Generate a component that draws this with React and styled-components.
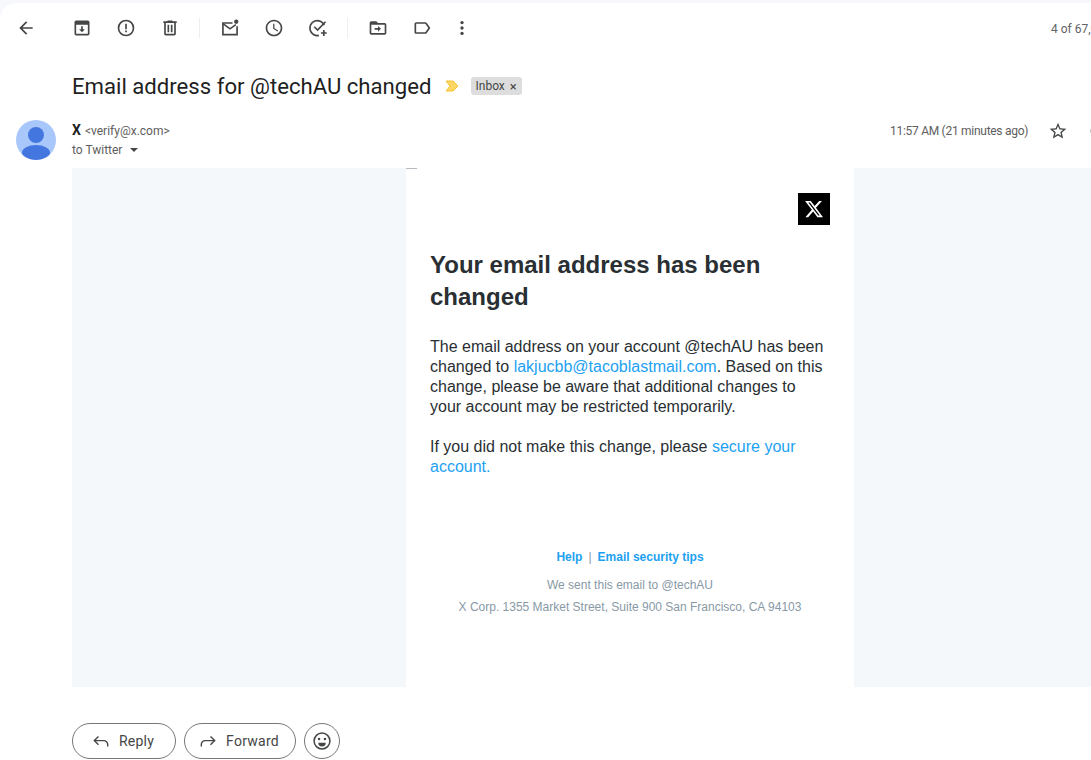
import React from "react";
import styled, { createGlobalStyle } from "styled-components";

const GlobalStyle = createGlobalStyle`
  html, body {
    margin: 0;
    padding: 0;
    height: 100%;
    overflow: hidden;
    background: #fff;
    font-family: Roboto, "Liberation Sans", Arial, sans-serif;
  }
`;

const iconPaths = {
  back: "M20 11H7.83l5.59-5.59L12 4l-8 8 8 8 1.41-1.41L7.83 13H20v-2z",
  trash:
    "M15 4V3H9v1H4v2h1v13c0 1.1.9 2 2 2h10c1.1 0 2-.9 2-2V6h1V4h-5zm2 15H7V6h10v13zM9 8h2v9H9zm4 0h2v9h-2z",
  clock:
    "M11.99 2C6.47 2 2 6.48 2 12s4.47 10 9.99 10C17.52 22 22 17.52 22 12S17.52 2 11.99 2zM12 20c-4.42 0-8-3.58-8-8s3.58-8 8-8 8 3.58 8 8-3.58 8-8 8zm.5-13H11v6l5.25 3.15.75-1.23-4.5-2.67z",
  label:
    "M17.63 5.84C17.27 5.33 16.67 5 16 5L5 5.01C3.9 5.01 3 5.9 3 7v10c0 1.1.9 1.99 2 1.99L16 19c.67 0 1.27-.33 1.63-.84L22 12l-4.37-6.16zM16 17H5V7h11l3.55 5L16 17z",
  star:
    "M22 9.24l-7.19-.62L12 2 9.19 8.63 2 9.24l5.46 4.73L5.82 21 12 17.27 18.18 21l-1.63-7.03L22 9.24zM12 15.4l-3.76 2.27 1-4.28-3.32-2.88 4.38-.38L12 6.1l1.71 4.04 4.38.38-3.32 2.88 1 4.28L12 15.4z",
};

function Icon({ name, size = 20, color = "#444746" }) {
  return (
    <svg width={size} height={size} viewBox="0 0 24 24" fill={color}>
      {name === "archive" && (
        <>
          <path d="M5 3h14a2 2 0 0 1 2 2v14a2 2 0 0 1-2 2H5a2 2 0 0 1-2-2V5a2 2 0 0 1 2-2zm0 5v11h14V8H5z" />
          <path d="M11 10h2v3.5h2.5L12 17l-3.5-3.5H11z" />
        </>
      )}
      {name === "report" && (
        <>
          <path d="M12 2a10 10 0 1 0 0 20 10 10 0 0 0 0-20zm0 18a8 8 0 1 1 0-16 8 8 0 0 1 0 16z" />
          <path d="M11 7h2v6.5h-2zM11 15h2v2h-2z" />
        </>
      )}
      {name === "unread" && (
        <>
          <g fill="none" stroke={color} strokeWidth="2">
            <path d="M15 6H3.5v14h17V10" />
            <path d="M4 7l8 6 7-5" />
          </g>
          <circle cx="19.5" cy="4.5" r="2.6" />
        </>
      )}
      {name === "addTask" && (
        <g fill="none" stroke={color} strokeWidth="2">
          <path d="M19.5 8.5A9 9 0 1 0 13 20.9" />
          <path d="M7.5 10.5l4 4L21 4.5" />
          <path d="M19 14.5v7M15.5 18h7" />
        </g>
      )}
      {name === "move" && (
        <>
          <path d="M20 6h-8l-2-2H4c-1.1 0-2 .9-2 2v12c0 1.1.9 2 2 2h16c1.1 0 2-.9 2-2V8c0-1.1-.9-2-2-2zm0 12H4V8h16v10z" />
          <path d="M12 9.5l3.5 3.5-3.5 3.5V14H8v-2h4z" />
        </>
      )}
      {name === "more" && (
        <>
          <circle cx="12" cy="5.5" r="2" />
          <circle cx="12" cy="12" r="2" />
          <circle cx="12" cy="18.5" r="2" />
        </>
      )}
      {iconPaths[name] && <path d={iconPaths[name]} />}
    </svg>
  );
}

function ReplyIcon({ flip }) {
  return (
    <svg
      width="20"
      height="20"
      viewBox="0 0 24 24"
      fill="none"
      stroke="#444746"
      strokeWidth="1.7"
      style={flip ? { transform: "scaleX(-1)" } : undefined}
    >
      <path d="M9 6.5L4 11.5l5 5" />
      <path d="M4 11.5h11.5a4.5 4.5 0 0 1 4.5 4.5v2.5" />
    </svg>
  );
}

export default function App() {
  return (
    <Page>
      <GlobalStyle />
      <Sheet>
        <Toolbar>
          <BackButton>
            <Icon name="back" />
          </BackButton>
          <ToolGroup>
            <ToolButton><Icon name="archive" /></ToolButton>
            <ToolButton><Icon name="report" /></ToolButton>
            <ToolButton><Icon name="trash" /></ToolButton>
          </ToolGroup>
          <ToolDivider />
          <ToolGroup>
            <ToolButton><Icon name="unread" /></ToolButton>
            <ToolButton><Icon name="clock" /></ToolButton>
            <ToolButton><Icon name="addTask" /></ToolButton>
          </ToolGroup>
          <ToolDivider />
          <ToolGroup>
            <ToolButton><Icon name="move" /></ToolButton>
            <ToolButton><Icon name="label" /></ToolButton>
            <ToolButton $narrow><Icon name="more" /></ToolButton>
          </ToolGroup>
          <Pager>4 of 67,000</Pager>
        </Toolbar>

        <SubjectRow>
          <Subject>Email address for @techAU changed</Subject>
          <svg width="14" height="12" viewBox="0 0 14 12">
            <path d="M1 1h7l5 5-5 5H1l4-5z" fill="#fdd663" stroke="#f4c430" strokeWidth="1" />
          </svg>
          <Chip>
            Inbox <ChipClose>×</ChipClose>
          </Chip>
        </SubjectRow>

        <SenderRow>
          <Avatar viewBox="0 0 40 40">
            <clipPath id="avatar-clip">
              <circle cx="20" cy="20" r="20" />
            </clipPath>
            <g clipPath="url(#avatar-clip)">
              <rect width="40" height="40" fill="#a8c7fa" />
              <circle cx="20" cy="15" r="8" fill="#4476e0" />
              <ellipse cx="20" cy="32.5" rx="14" ry="7.5" fill="#4476e0" />
            </g>
          </Avatar>
          <SenderInfo>
            <SenderLine>
              <SenderName>X</SenderName>
              <SenderMail>&lt;verify@x.com&gt;</SenderMail>
            </SenderLine>
            <ToLine>
              to Twitter
              <Caret />
            </ToLine>
          </SenderInfo>
          <Meta>
            <Time>11:57 AM (21 minutes ago)</Time>
            <Icon name="star" size={20} />
            <MetaExtra>
              <Icon name="report" size={20} />
            </MetaExtra>
          </Meta>
        </SenderRow>

        <MailBody>
          <Gutter />
          <Card>
            <LogoRow>
              <Logo>
                <svg width="20" height="20" viewBox="0 0 24 24" fill="#fff">
                  <path d="M18.24 2.25h3.31l-7.23 8.26 8.5 11.24h-6.66l-5.21-6.82-5.97 6.82H1.68l7.73-8.84L1.25 2.25h6.83l4.71 6.23zm-1.16 17.52h1.83L7.08 4.13H5.12z" />
                </svg>
              </Logo>
            </LogoRow>
            <Heading>Your email address has been changed</Heading>
            <Paragraph>
              The email address on your account @techAU has been changed to{" "}
              <BlueLink>lakjucbb@tacoblastmail.com</BlueLink>. Based on this change,
              please be aware that additional changes to your account may be
              restricted temporarily.
            </Paragraph>
            <Paragraph>
              If you did not make this change, please{" "}
              <BlueLink>secure your account.</BlueLink>
            </Paragraph>
            <Footer>
              <FooterLinks>
                <FooterLink>Help</FooterLink>
                <FooterSep>|</FooterSep>
                <FooterLink>Email security tips</FooterLink>
              </FooterLinks>
              <FooterText>We sent this email to @techAU</FooterText>
              <FooterText>X Corp. 1355 Market Street, Suite 900 San Francisco, CA 94103</FooterText>
            </Footer>
          </Card>
          <Gutter />
        </MailBody>

        <Actions>
          <PillButton $width={104}>
            <ReplyIcon />
            Reply
          </PillButton>
          <PillButton $width={112}>
            <ReplyIcon flip />
            Forward
          </PillButton>
          <EmojiButton>
            <svg width="20" height="20" viewBox="0 0 24 24" fill="none">
              <circle cx="12" cy="12" r="9.5" stroke="#444746" strokeWidth="1.8" />
              <circle cx="8.5" cy="9.5" r="1.5" fill="#444746" />
              <circle cx="15.5" cy="9.5" r="1.5" fill="#444746" />
              <path d="M7.5 14h9a4.5 4.5 0 0 1-9 0z" fill="#444746" />
            </svg>
          </EmojiButton>
        </Actions>
      </Sheet>
    </Page>
  );
}

const Page = styled.div`
  width: 1160px;
  height: 760px;
  overflow: hidden;
  background: #f6f8fc;
  color: #1f1f1f;
`;

const Sheet = styled.div`
  height: 757px;
  margin-top: 3px;
  padding-top: 0.02px;
  border-top-left-radius: 16px;
  background: #fff;
`;

const Toolbar = styled.div`
  display: flex;
  align-items: center;
  height: 50px;
  padding-left: 6px;
`;

const BackButton = styled.div`
  display: flex;
  align-items: center;
  justify-content: center;
  width: 40px;
  margin-right: 14px;
`;

const ToolGroup = styled.div`
  display: flex;
`;

const ToolButton = styled.div`
  display: flex;
  align-items: center;
  justify-content: center;
  width: ${(p) => (p.$narrow ? 36 : 44)}px;
`;

const ToolDivider = styled.div`
  width: 1px;
  height: 20px;
  margin: 0 8px 0 7px;
  background: #eceef1;
`;

const Pager = styled.div`
  margin-left: 571px;
  padding-top: 2px;
  font-size: 12px;
  color: #5f6368;
  white-space: nowrap;
`;

const SubjectRow = styled.div`
  display: flex;
  align-items: center;
  height: 32px;
  margin-top: 17px;
  padding-left: 72px;
`;

const Subject = styled.h1`
  margin: 0 13px 0 0;
  font-size: 22.15px;
  font-weight: 400;
  color: #1f1f1f;
  white-space: nowrap;
`;

const Chip = styled.span`
  display: flex;
  align-items: center;
  gap: 5px;
  height: 18px;
  margin-left: 12px;
  padding: 0 5px;
  border-radius: 3px;
  background: #dddddd;
  font-size: 12px;
  color: #444746;
`;

const ChipClose = styled.span`
  font-size: 13px;
`;

const SenderRow = styled.div`
  display: flex;
  align-items: flex-start;
  height: 51px;
  margin-top: 15px;
  padding-left: 16px;
`;

const Avatar = styled.svg`
  width: 40px;
  height: 40px;
  flex-shrink: 0;
  margin-top: 3px;
`;

const SenderInfo = styled.div`
  display: flex;
  flex-direction: column;
  width: 100px;
  margin-left: 16px;
  padding-top: 5px;
`;

const SenderLine = styled.div`
  display: flex;
  align-items: baseline;
  gap: 4px;
  height: 18px;
  white-space: nowrap;
`;

const SenderName = styled.span`
  font-size: 14px;
  font-weight: 700;
  color: #1f1f1f;
`;

const SenderMail = styled.span`
  font-size: 12px;
  color: #5e5e5e;
`;

const ToLine = styled.div`
  display: flex;
  align-items: center;
  gap: 8px;
  height: 20px;
  font-size: 12px;
  color: #5e5e5e;
`;

const Caret = styled.span`
  width: 0;
  height: 0;
  border-left: 4px solid transparent;
  border-right: 4px solid transparent;
  border-top: 4px solid #444746;
`;

const Meta = styled.div`
  display: flex;
  align-items: center;
  height: 20px;
  margin-left: 718px;
  padding-top: 4px;
  white-space: nowrap;
`;

const Time = styled.span`
  width: 158px;
  font-size: 12px;
  letter-spacing: -0.28px;
  color: #5e5e5e;
`;

const MetaExtra = styled.span`
  display: flex;
  margin-left: 21px;
`;

const MailBody = styled.div`
  display: grid;
  grid-template-columns: 334px 448px 1fr;
  height: 519px;
  margin-left: 72px;
`;

const Gutter = styled.div`
  background: #f5f8fa;
`;

const Card = styled.div`
  position: relative;
  padding: 25px 24px 0;
  background: #fff;
  font-family: "Liberation Sans", Arial, sans-serif;

  &::before {
    content: "";
    position: absolute;
    top: 0;
    left: 0;
    width: 11px;
    height: 1px;
    background: #b8bcc0;
  }
`;

const LogoRow = styled.div`
  display: flex;
  justify-content: flex-end;
`;

const Logo = styled.div`
  display: flex;
  align-items: center;
  justify-content: center;
  width: 32px;
  height: 32px;
  background: #000;
`;

const Heading = styled.h2`
  margin: 24px 0 0;
  font-size: 24px;
  line-height: 32px;
  font-weight: 700;
  color: #292f33;
`;

const Paragraph = styled.p`
  margin: 24px 0 20px;
  font-size: 16px;
  line-height: 20px;
  color: #292f33;

  & + & {
    margin-top: 0;
  }
`;

const BlueLink = styled.span`
  color: #1da1f2;
`;

const Footer = styled.div`
  display: flex;
  flex-direction: column;
  align-items: center;
  margin-top: 71px;
  font-size: 12px;
`;

const FooterLinks = styled.div`
  display: flex;
  gap: 6px;
  height: 18px;
  line-height: 18px;
  margin-bottom: 10px;
`;

const FooterLink = styled.span`
  font-weight: 700;
  color: #1da1f2;
`;

const FooterSep = styled.span`
  color: #8899a6;
`;

const FooterText = styled.div`
  height: 22px;
  line-height: 18px;
  color: #8899a6;
  white-space: nowrap;
`;

const Actions = styled.div`
  display: flex;
  gap: 8px;
  margin-top: 36px;
  padding-left: 72px;
`;

const PillButton = styled.div`
  display: flex;
  align-items: center;
  justify-content: center;
  gap: 8px;
  box-sizing: border-box;
  width: ${(p) => p.$width}px;
  height: 36px;
  padding-right: 3px;
  border: 1px solid #747775;
  border-radius: 18px;
  font-size: 14px;
  font-weight: 400;
  letter-spacing: 0.25px;
  color: #444746;
`;

const EmojiButton = styled.div`
  display: flex;
  align-items: center;
  justify-content: center;
  box-sizing: border-box;
  width: 36px;
  height: 36px;
  border: 1px solid #747775;
  border-radius: 50%;
`;
